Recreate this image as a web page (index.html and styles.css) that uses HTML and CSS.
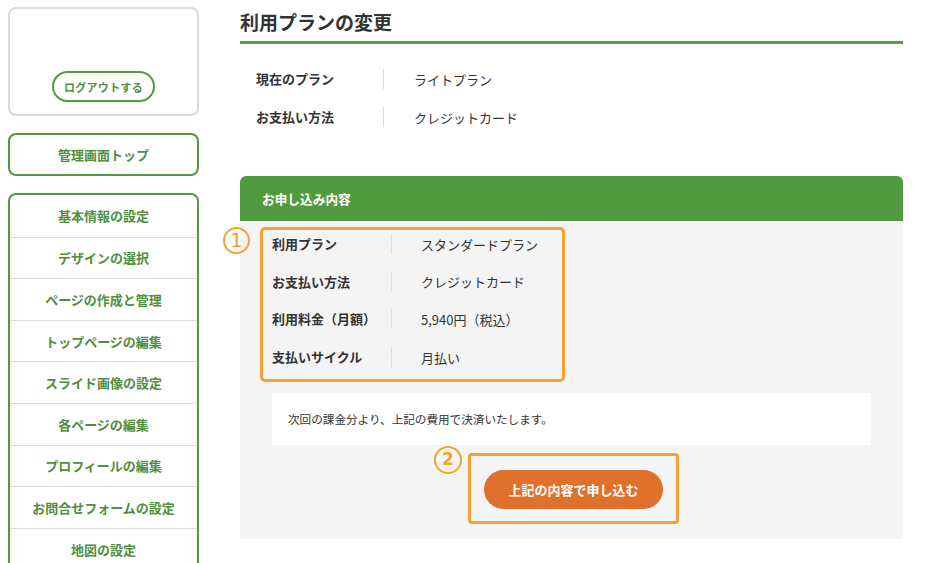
FILE: index.html
```html
<!DOCTYPE html>
<html lang="ja">
<head>
<meta charset="utf-8">
<link rel="stylesheet" href="styles.css">
</head>
<body>
<div class="page">
  <aside class="sidebar">
    <div class="user-card">
      <a class="logout">ログアウトする</a>
    </div>
    <a class="top-btn">管理画面トップ</a>
    <ul class="menu">
      <li>基本情報の設定</li>
      <li>デザインの選択</li>
      <li>ページの作成と管理</li>
      <li>トップページの編集</li>
      <li>スライド画像の設定</li>
      <li>各ページの編集</li>
      <li>プロフィールの編集</li>
      <li>お問合せフォームの設定</li>
      <li>地図の設定</li>
    </ul>
  </aside>
  <main class="main">
    <h1 class="title">利用プランの変更</h1>
    <dl class="current">
      <div class="row"><dt>現在のプラン</dt><dd>ライトプラン</dd></div>
      <div class="row"><dt>お支払い方法</dt><dd>クレジットカード</dd></div>
    </dl>
    <section class="panel">
      <div class="panel-head">お申し込み内容</div>
      <div class="panel-body">
        <div class="hl-wrap">
          <span class="num num1">1</span>
          <dl class="details">
            <div class="row"><dt>利用プラン</dt><dd>スタンダードプラン</dd></div>
            <div class="row"><dt>お支払い方法</dt><dd>クレジットカード</dd></div>
            <div class="row"><dt>利用料金（月額）</dt><dd>5,940円（税込）</dd></div>
            <div class="row"><dt>支払いサイクル</dt><dd>月払い</dd></div>
          </dl>
        </div>
        <p class="notice">次回の課金分より、上記の費用で決済いたします。</p>
        <div class="submit-area">
          <span class="num num2">2</span>
          <div class="submit-box">
            <button class="submit">上記の内容で申し込む</button>
          </div>
        </div>
      </div>
    </section>
  </main>
</div>
</body>
</html>
```
FILE: styles.css
```css
* { box-sizing: border-box; }
html, body { margin: 0; padding: 0; background: #fff; }
body {
  font-family: "Noto Sans CJK JP", "Noto Sans", sans-serif;
  color: #333;
  width: 944px;
  height: 563px;
  overflow: hidden;
}
.page {
  display: flex;
  align-items: flex-start;
  padding: 7px 0 0 8px;
}
.sidebar {
  width: 191px;
  flex: none;
  display: flex;
  flex-direction: column;
}
.user-card {
  height: 109px;
  border: 2px solid #d9d9d9;
  border-radius: 8px;
  display: flex;
  justify-content: center;
  align-items: flex-end;
  padding-bottom: 12px;
}
.logout {
  width: 103px;
  height: 31px;
  border: 2px solid #529a3f;
  border-radius: 16px;
  display: flex;
  align-items: center;
  justify-content: center;
  font-size: 11px;
  font-weight: bold;
  color: #4f8f3d;
  letter-spacing: 0.3px;
}
.top-btn {
  margin-top: 17px;
  height: 43px;
  border: 2px solid #529a3f;
  border-radius: 8px;
  display: flex;
  align-items: center;
  justify-content: center;
  font-size: 13px;
  font-weight: bold;
  color: #4f8f3d;
}
.menu {
  list-style: none;
  margin: 17px 0 0;
  padding: 0;
  border: 2px solid #529a3f;
  border-radius: 8px;
}
.menu li {
  height: 41.6px;
  display: flex;
  align-items: center;
  justify-content: center;
  font-size: 13px;
  font-weight: bold;
  color: #4f8f3d;
  border-bottom: 1px solid #dcdcdc;
}
.menu li:first-child { height: 42.6px; }
.main {
  margin-left: 41px;
  width: 663px;
  flex: none;
}
.title {
  margin: 0;
  font-size: 19px;
  font-weight: bold;
  color: #333;
  line-height: 28px;
  height: 37px;
  padding-top: 1px;
  border-bottom: 3px solid #5b9c48;
}
.current {
  margin: 0;
  padding: 16px 0 0 16px;
}
.row {
  display: flex;
  align-items: center;
}
.row dt {
  font-weight: bold;
  font-size: 13px;
  margin: 0;
}
.row dd {
  margin: 0;
  font-size: 13px;
}
.current .row { height: 38px; }
.current .row dt {
  width: 128px;
  height: 20px;
  line-height: 20px;
  border-right: 1px solid #dcdcdc;
}
.current .row dd { padding-left: 30px; }
.panel {
  margin-top: 40px;
}
.panel-head {
  height: 45px;
  background: #529a3f;
  border-radius: 6px 6px 0 0;
  color: #fff;
  font-size: 12.7px;
  font-weight: bold;
  display: flex;
  align-items: center;
  padding-left: 22px;
}
.panel-body {
  background: #f4f4f4;
  padding: 6px 32px 17px 20px;
  height: 318px;
}
.hl-wrap {
  position: relative;
}
.num {
  position: absolute;
  width: 27px;
  height: 27px;
  border: 2.5px solid #f5a030;
  border-radius: 50%;
  color: #f5a030;
  font-family: "DejaVu Sans", sans-serif;
  font-weight: bold;
  font-size: 17px;
  line-height: 22px;
  text-align: center;
}
.num1 {
  left: -37px;
  top: 0;
  font-size: 19px;
  font-weight: normal;
}
.num2 {
  left: 174px;
  top: -7px;
  width: 28px;
  height: 28px;
  box-shadow: 0 0 0 1.5px #fff, inset 0 0 0 1px #fff;
  text-shadow: 0 0 2px #fff, 0 0 1px #fff;
}
.details {
  margin: 0;
  width: 305px;
  height: 155px;
  border: 3px solid #f5a030;
  border-radius: 5px;
  padding: 0 0 0 9px;
  display: flex;
  flex-direction: column;
  gap: 9.7px;
}
.details .row { height: 28px; flex: none; }
.details .row dt {
  width: 120px;
  height: 20px;
  line-height: 20px;
  border-right: 1px solid #dedede;
}
.details .row dd { padding-left: 29px; }
.notice {
  margin: 11px 0 0 12px;
  width: 599px;
  height: 52px;
  background: #fff;
  font-size: 11.6px;
  display: flex;
  align-items: center;
  padding-left: 16px;
}
.submit-area {
  position: relative;
  display: flex;
  margin-top: 8px;
  padding-left: 208px;
}
.submit-box {
  width: 211px;
  height: 71px;
  border: 3px solid #f5a030;
  border-radius: 4px;
  display: flex;
  align-items: center;
  justify-content: center;
}
.submit {
  width: 179px;
  height: 39px;
  border: none;
  border-radius: 20px;
  background: #e0712c;
  color: #fff;
  font-family: "Noto Sans CJK JP", "Noto Sans", sans-serif;
  font-size: 13px;
  font-weight: bold;
  margin-top: 1px;
}
```
